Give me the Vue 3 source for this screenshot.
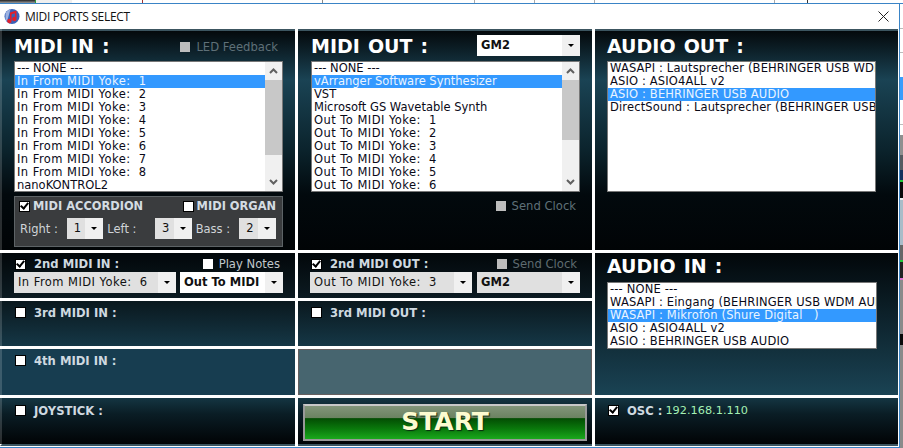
<template>
  <div class="screen">
    <!-- remains of the sheet behind the dialog -->
    <div class="backdrop-top">
      <span class="top-dark"></span>
      <span class="top-light"></span>
      <span v-for="t in topTicks" :key="t.x" class="tick" :style="{ left: t.x + 'px', background: t.c }"></span>
    </div>
    <div class="backdrop-right">
      <span
        v-for="b in sideBlocks"
        :key="b.y"
        class="block"
        :style="{ top: b.y + 'px', height: b.h + 'px', background: b.c }"
      ></span>
    </div>

    <div class="dialog">
      <div class="titlebar">
        <svg class="app-icon" width="16" height="17" viewBox="0 0 16 17">
          <circle cx="8" cy="8.5" r="7.5" fill="#3a62b8" />
          <path d="M1.5 6a7 7 0 0 1 5-4.8L3 13.5 1.5 11.5z" fill="#9cb2e2" />
          <path d="M6 4.5l6.5-2v8.5a2.2 2.2 0 1 1-1.6-2.1V5.2L7.6 6.2V13a2.2 2.2 0 1 1-1.6-2.1z" fill="#e2202c" />
        </svg>
        <span class="title">MIDI PORTS SELECT</span>
        <svg class="close" width="11" height="11" viewBox="0 0 11 11">
          <path d="M0.5 0.5l10 10M10.5 0.5l-10 10" stroke="#222" stroke-width="1" fill="none" />
        </svg>
      </div>

      <div class="grid">
        <!-- MIDI IN -->
        <section class="panel tall col-a">
          <div class="heading-row">
            <h2>MIDI IN :</h2>
            <label class="led feedback"><i class="sq grey"></i>LED Feedback</label>
          </div>
          <div class="list in-list">
            <div class="rows">
              <div v-for="(r, i) in midiIn" :key="r" class="row" :class="{ on: i === 1, yoke: r.includes('Yoke') }">{{ r }}</div>
            </div>
            <div class="scrollbar">
              <svg class="arrow" width="17" height="18" viewBox="0 0 17 18"><path d="M5 11l3.500-3.500L12 11" /></svg>
              <span class="thumb thumb-in"></span>
              <svg class="arrow down" width="17" height="18" viewBox="0 0 17 18"><path d="M5 7l3.500 3.500L12 7" /></svg>
            </div>
          </div>
          <div class="accordion">
            <div class="acc-top">
              <span class="chk"><i class="box dark checked"></i>MIDI ACCORDION</span>
              <span class="chk"><i class="box dark"></i>MIDI ORGAN</span>
            </div>
            <div class="acc-bottom">
              <span class="lbl right">Right :</span>
              <span class="combo small"><b>1</b><u></u></span>
              <span class="lbl left">Left :</span>
              <span class="combo small"><b>3</b><u></u></span>
              <span class="lbl bass">Bass :</span>
              <span class="combo small"><b>2</b><u></u></span>
            </div>
          </div>
        </section>

        <!-- MIDI OUT -->
        <section class="panel tall col-b">
          <div class="heading-row">
            <h2>MIDI OUT :</h2>
            <span class="combo gm-top"><b>GM2</b><u></u></span>
          </div>
          <div class="list out-list">
            <div class="rows">
              <div v-for="(r, i) in midiOut" :key="r" class="row" :class="{ on: i === 1, yoke: r.includes('Yoke') }">{{ r }}</div>
            </div>
            <div class="scrollbar">
              <svg class="arrow" width="17" height="18" viewBox="0 0 17 18"><path d="M5 11l3.500-3.500L12 11" /></svg>
              <span class="thumb thumb-out"></span>
              <svg class="arrow down" width="17" height="18" viewBox="0 0 17 18"><path d="M5 7l3.500 3.500L12 7" /></svg>
            </div>
          </div>
          <label class="led clock"><i class="sq grey"></i>Send Clock</label>
        </section>

        <!-- AUDIO OUT -->
        <section class="panel tall audio-out">
          <div class="heading-row"><h2>AUDIO OUT :</h2></div>
          <div class="list audio-list">
            <div class="rows">
              <div v-for="(r, i) in audioOut" :key="r" class="row" :class="{ on: i === 2 }">{{ r }}</div>
            </div>
          </div>
        </section>

        <!-- second row -->
        <section class="panel second col-a">
          <div class="second-top">
            <span class="port-label"><i class="box checked"></i>2nd MIDI IN :</span>
            <label class="led notes"><i class="sq white"></i>Play Notes</label>
          </div>
          <div class="second-combos">
            <span class="combo wide yoke"><b>In From MIDI Yoke:&nbsp; 6</b><u></u></span>
            <span class="combo mode"><b>Out To MIDI</b><u></u></span>
          </div>
        </section>

        <section class="panel second col-b">
          <div class="second-top">
            <span class="port-label"><i class="box checked"></i>2nd MIDI OUT :</span>
            <label class="led notes off"><i class="sq grey"></i>Send Clock</label>
          </div>
          <div class="second-combos">
            <span class="combo wide yoke"><b>Out To MIDI Yoke:&nbsp; 3</b><u></u></span>
            <span class="combo mode grey-mode"><b>GM2</b><u></u></span>
          </div>
        </section>

        <!-- AUDIO IN -->
        <section class="panel audio-in">
          <h2>AUDIO IN :</h2>
          <div class="list audio-in-list">
            <div class="rows">
              <div v-for="(r, i) in audioIn" :key="r" class="row" :class="{ on: i === 2 }">{{ r }}</div>
            </div>
          </div>
        </section>

        <section class="panel third col-a">
          <span class="port-label"><i class="box"></i>3rd MIDI IN :</span>
        </section>
        <section class="panel third col-b">
          <span class="port-label"><i class="box"></i>3rd MIDI OUT :</span>
        </section>

        <section class="panel fourth col-a">
          <span class="port-label"><i class="box"></i>4th MIDI IN :</span>
        </section>
        <section class="panel disabled"></section>

        <section class="panel bottom col-a">
          <span class="port-label"><i class="box"></i>JOYSTICK :</span>
        </section>
        <section class="panel bottom start-cell">
          <button class="start">START</button>
        </section>
        <section class="panel bottom osc-cell">
          <span class="port-label osc"><i class="box checked"></i>OSC :<em>192.168.1.110</em></span>
        </section>
      </div>
    </div>
  </div>
</template>

<script setup>
const topTicks = [
  { x: 35, c: "#2c9a3a" },
  { x: 142, c: "#a03030" },
  { x: 322, c: "#888" },
  { x: 474, c: "#aaa" },
  { x: 534, c: "#aaa" },
  { x: 594, c: "#aaa" },
  { x: 774, c: "#aaa" },
  { x: 807, c: "#333" },
];

// what is visible of the sheet to the right of the dialog
const sideBlocks = [
  { y: 28, h: 1, c: "#bbb" },
  { y: 52, h: 1, c: "#bbb" },
  { y: 77, h: 23, c: "#3a9dfc" },
  { y: 124, h: 1, c: "#bbb" },
  { y: 135, h: 20, c: "#8f8f8f" },
  { y: 155, h: 15, c: "#555a60" },
  { y: 170, h: 10, c: "#14305c" },
  { y: 180, h: 2, c: "#22c83a" },
  { y: 182, h: 16, c: "#0a0a0a" },
  { y: 198, h: 2, c: "#eee" },
  { y: 200, h: 45, c: "#a9bcc8" },
  { y: 245, h: 15, c: "#666" },
  { y: 260, h: 2, c: "#22c83a" },
  { y: 262, h: 16, c: "#222" },
  { y: 278, h: 2, c: "#e070d0" },
  { y: 280, h: 54, c: "#8a8a8a" },
  { y: 334, h: 11, c: "#0a0a0a" },
  { y: 345, h: 103, c: "#8a8a8a" },
];

const midiIn = [
  "--- NONE ---",
  ...[1, 2, 3, 4, 5, 6, 7, 8].map((n) => `In From MIDI Yoke:\u00a0 ${n}`),
  "nanoKONTROL2",
];

const midiOut = [
  "--- NONE ---",
  "vArranger Software Synthesizer",
  "VST",
  "Microsoft GS Wavetable Synth",
  ...[1, 2, 3, 4, 5, 6].map((n) => `Out To MIDI Yoke:\u00a0 ${n}`),
];

const audioOut = [
  "WASAPI : Lautsprecher (BEHRINGER USB WDM AUDIO)",
  "ASIO : ASIO4ALL v2",
  "ASIO : BEHRINGER USB AUDIO",
  "DirectSound : Lautsprecher (BEHRINGER USB WDM AUDIO)",
];

const audioIn = [
  "--- NONE ---",
  "WASAPI : Eingang (BEHRINGER USB WDM AUDIO)",
  "WASAPI : Mikrofon (Shure Digital\u00a0\u00a0 )",
  "ASIO : ASIO4ALL v2",
  "ASIO : BEHRINGER USB AUDIO",
];
</script>

<style>
html,
body {
  margin: 0;
  background: #fff;
}
</style>

<style scoped>
.screen {
  width: 903px;
  height: 448px;
  position: relative;
  overflow: hidden;
  background: #fff;
  font-family: "DejaVu Sans", sans-serif;
}

.backdrop-top {
  height: 3px;
  border-bottom: 1px solid #3a84c6;
  position: relative;
}

.top-dark {
  position: absolute;
  left: 0;
  top: 0;
  width: 35px;
  height: 3px;
  background: linear-gradient(#222, #999);
}

.top-light {
  position: absolute;
  left: 36px;
  top: 0;
  width: 36px;
  height: 3px;
  background: #efefef;
}

.tick {
  position: absolute;
  top: 0;
  width: 1px;
  height: 3px;
}

.backdrop-right {
  position: absolute;
  left: 900px;
  top: 0;
  width: 3px;
  height: 448px;
}

.block {
  position: absolute;
  left: 0;
  width: 3px;
}

.dialog {
  width: 900px;
  height: 444px;
  border-right: 1px solid #3a84c6;
  border-bottom: 1px solid #3a84c6;
  box-sizing: border-box;
  position: relative;
  background: #fff;
}

.titlebar {
  height: 25px;
  display: flex;
  align-items: center;
  padding: 0 0 1px 4px;
  box-sizing: border-box;
  position: relative;
}

.title {
  margin-left: 5px;
  font-family: "Open Sans", sans-serif;
  font-size: 12px;
  letter-spacing: -0.3px;
  color: #111;
}

.close {
  position: absolute;
  right: 10px;
  top: 7px;
}

.grid {
  display: grid;
  grid-template-columns: 295px 294px 303px;
  grid-template-rows: 221px 45px 45px 46px 47px;
  column-gap: 3px;
  row-gap: 3px;
}

.panel {
  box-sizing: border-box;
  color: #fff;
  min-width: 0;
}

.col-a {
  border-left: 2px solid rgba(255, 255, 255, 0.16);
}

.tall {
  background: linear-gradient(#3c5560 0, #3c5560 2px, #04090c 2px, #1a4354 23%, #0b232c 55%, #02090d 75%, #010406 100%);
  padding: 4px 12px 0;
}

.col-b {
  padding-left: 13px;
}

h2 {
  margin: 0;
  font-family: "DejaVu Sans", sans-serif;
  font-size: 19px;
  font-weight: 700;
  line-height: 24px;
  color: #fff;
  word-spacing: 1.5px;
}

.heading-row {
  display: flex;
  justify-content: space-between;
  align-items: center;
  height: 25px;
}

.led {
  display: inline-flex;
  align-items: center;
  font-size: 11.6px;
  color: #5f7078;
  gap: 6px;
}

.feedback {
  margin: 2px 5px 0 0;
}

.sq {
  width: 10px;
  height: 10px;
  display: inline-block;
}

.sq.grey {
  background: #bdbdbd;
}

.sq.white {
  background: #fff;
}

.list {
  display: flex;
  background: #fff;
  border: 1px solid #777;
  box-sizing: border-box;
  overflow: hidden;
  color: #0a0a18;
}

.in-list,
.out-list,
.audio-list {
  height: 131px;
  margin-top: 3px;
}

.audio-list {
  width: 269px;
}

.audio-list .row,
.audio-in-list .row {
  letter-spacing: 0.15px;
}

.rows {
  flex: 1;
  min-width: 0;
  overflow: hidden;
  font-size: 11.5px;
  line-height: 13px;
}

.row {
  white-space: nowrap;
  padding-left: 2px;
  height: 13px;
  overflow: hidden;
}

.row.yoke,
.combo.yoke {
  letter-spacing: 0.45px;
}

.row.on {
  background: #3399ff;
  color: #eaf4ff;
}

.scrollbar {
  width: 17px;
  background: #f0f0f0;
  display: flex;
  flex-direction: column;
}

.arrow {
  flex: none;
  fill: none;
  stroke: #606060;
  stroke-width: 2;
}

.arrow.down {
  margin-top: auto;
}

.thumb {
  width: 100%;
  background: #c8c8c8;
}

.thumb-in {
  height: 75px;
}

.thumb-out {
  height: 60px;
}

.accordion {
  margin-top: 4px;
  height: 51px;
  background: #3a3c3e;
  border: 1px solid #5d6366;
  box-sizing: border-box;
  padding: 1px 6px 0 4px;
}

.acc-top {
  display: flex;
  justify-content: space-between;
  height: 16px;
  align-items: center;
}

.chk {
  display: inline-flex;
  align-items: center;
  gap: 3px;
  font-size: 11.4px;
  font-weight: 700;
  color: #d4dce2;
}

.box {
  width: 11px;
  height: 11px;
  box-sizing: border-box;
  background: #fff;
  border: 1px solid #000;
  display: inline-block;
  position: relative;
  flex: none;
}

.box.checked::after {
  content: "";
  position: absolute;
  left: 2px;
  top: -1px;
  width: 5px;
  height: 8px;
  border: solid #000;
  border-width: 0 2px 2px 0;
  transform: rotate(40deg);
  box-sizing: border-box;
}

.acc-bottom {
  display: flex;
  align-items: center;
  margin-top: 4px;
  font-size: 11.5px;
  color: #d0d4d8;
}

.lbl {
  white-space: nowrap;
  box-sizing: border-box;
}

.lbl.right {
  width: 47px;
  margin-left: 1px;
}

.lbl.left {
  width: 52px;
  padding-left: 4px;
}

.lbl.bass {
  width: 48px;
  padding-left: 4px;
}

.combo {
  display: inline-flex;
  height: 21px;
  background: #e0e0e0;
  box-sizing: border-box;
  color: #111;
  font-size: 11.5px;
  align-items: center;
  position: relative;
}

.combo b {
  font-weight: 400;
  flex: 1;
  padding-left: 4px;
  white-space: nowrap;
  line-height: 21px;
}

.combo u {
  width: 18px;
  height: 100%;
  background: #f0f0f0;
  position: relative;
  text-decoration: none;
  flex: none;
  margin-left: 1px;
}

.combo u::after {
  content: "";
  position: absolute;
  left: 6px;
  top: 9px;
  border: 3px solid transparent;
  border-top: 3px solid #000;
  border-bottom: 0;
}

.combo.small {
  width: 37px;
}

.combo.small b {
  padding-left: 7px;
}

.gm-top {
  width: 103px;
  background: #fff;
}

.gm-top b,
.mode b {
  font-weight: 700;
}

.second {
  background: linear-gradient(#02070a, #0c1b22);
  padding: 3px 12px 0;
}

.second-top {
  display: flex;
  justify-content: space-between;
  height: 16px;
  align-items: center;
  padding: 0 3px 0 1px;
}

.port-label {
  display: inline-flex;
  align-items: center;
  font-size: 11.6px;
  font-weight: 700;
  color: #cfd9e0;
}

.port-label .box {
  margin-right: 8px;
}

.second-combos {
  display: flex;
  justify-content: space-between;
}

.wide {
  width: 162px;
}

.mode {
  width: 103px;
  background: #fff;
}

.grey-mode {
  background: #e0e0e0;
}

.notes {
  color: #c0c8cc;
}

.notes.off {
  color: #5f6b70;
}

.clock {
  display: flex;
  justify-content: flex-end;
  margin-top: 7px;
  padding-right: 4px;
}

.audio-in {
  grid-column: 3;
  grid-row: 2 / span 3;
  background: linear-gradient(#02070a, #1a4354);
  padding: 1px 12px 0;
}

.audio-in-list {
  width: 270px;
  height: 67px;
  margin-top: 4px;
}

.third {
  background: linear-gradient(#0a181e, #153746);
  padding: 2px 13px 0;
}

.fourth {
  background: #173d50;
  padding: 2px 13px 0;
}

.disabled {
  background: #47656f;
  border: 1px solid #655f5f;
}

.bottom {
  background: linear-gradient(#143542 0, #0a1d25 35%, #010305 100%);
  padding: 3px 13px 0;
  border-bottom: 2px solid #3c5560;
  height: 48px;
}

.start-cell {
  padding: 6px 5px 0;
}

.start {
  display: block;
  width: 284px;
  height: 37px;
  padding: 0 0 2px;
  border: 2px solid #999;
  border-top-color: #c8c8c8;
  background: linear-gradient(#82957a 0, #6a8260 37%, #034d03 38%, #0a7a0c 70%, #1aa81c 100%);
  color: #fdfbd0;
  font-family: "DejaVu Sans", sans-serif;
  font-size: 25px;
  font-weight: 700;
  text-shadow: 1px 1px 1px #0a2a10;
}

.osc em {
  font-style: normal;
  font-weight: 400;
  font-size: 11.3px;
  color: #a4f0b4;
  margin-left: 3px;
}
</style>
